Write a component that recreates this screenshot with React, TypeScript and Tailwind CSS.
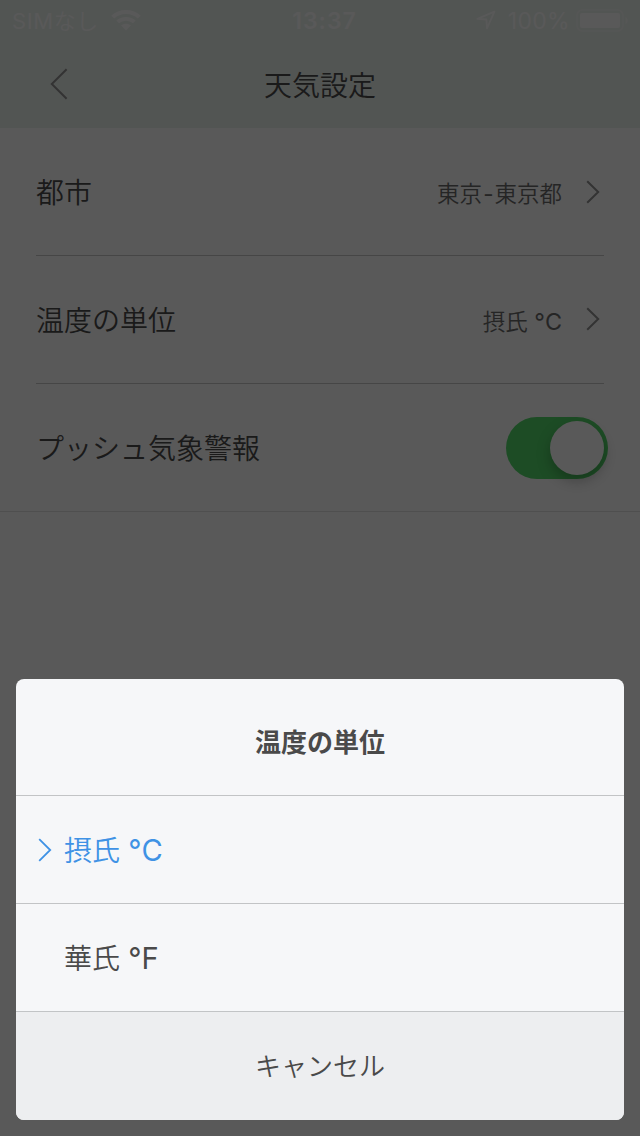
import React from 'react';
import clsx from 'clsx';

interface ChevronProps {
  className?: string;
  strokeWidth?: number;
}

const Chevron: React.FC<ChevronProps> = ({ className, strokeWidth = 2 }) => (
  <svg
    width="14"
    height="24"
    viewBox="0 0 14 24"
    fill="none"
    stroke="currentColor"
    strokeWidth={strokeWidth}
    className={className}
  >
    <path d="M1.2 1.2L12.2 12L1.2 22.8" />
  </svg>
);

const StatusBar: React.FC = () => (
  <div className="grid grid-cols-3 items-center h-10 pl-3 pr-[11px] text-[22px] text-white">
    <div className="flex items-center gap-3">
      <span className="pt-0.5 whitespace-nowrap tracking-[0.6px]">
        SIM<span className="font-[350]">なし</span>
      </span>
      <svg width="30" height="21" viewBox="0 0 28 21" preserveAspectRatio="none" fill="none" stroke="currentColor">
        <path d="M1.6 7.2C8.4 0.4 19.6 0.4 26.4 7.2" strokeWidth="4" />
        <path d="M6.2 11.9C10.4 7.8 17.6 7.8 21.8 11.9" strokeWidth="3.6" />
        <path d="M14 20.5L9.4 15.6C12 13.2 16 13.2 18.6 15.6Z" fill="currentColor" stroke="none" />
      </svg>
    </div>
    <span className="pt-0.5 pl-2 text-center font-semibold text-[23px] tracking-[1px]">13:37</span>
    <div className="flex items-center justify-end">
      <svg width="20" height="20" viewBox="0 0 20 20" fill="none" stroke="currentColor" strokeWidth="1.8" strokeLinejoin="round" className="mr-3">
        <path d="M18.4 1.6L1.4 8.8L10.4 9.5L11 18.4Z" />
      </svg>
      <span className="pt-0.5 mr-1.5 text-[23px] tracking-[0.3px]">100%</span>
      <svg width="53" height="23" viewBox="0 0 53 23">
        <rect x="1" y="1" width="46" height="21" rx="5.5" fill="none" stroke="currentColor" strokeOpacity="0.4" strokeWidth="1.6" />
        <rect x="4" y="4" width="40" height="15" rx="2" fill="currentColor" />
        <path d="M49.5 8C52.5 9 52.5 14 49.5 15Z" fill="currentColor" fillOpacity="0.5" />
      </svg>
    </div>
  </div>
);

const Header: React.FC = () => (
  <header className="h-32 bg-[#ebf2ed]">
    <StatusBar />
    <div className="grid grid-cols-3 items-center h-[88px]">
      <svg width="18" height="32" viewBox="0 0 18 32" fill="none" stroke="#929292" strokeWidth="2" className="ml-[50px]">
        <path d="M16.6 1.2L1.8 16L16.6 30.8" />
      </svg>
      <h1 className="pt-1 text-center text-[28px] font-[350] text-[#4c4c4c]">天気設定</h1>
    </div>
  </header>
);

interface UnitLabelProps {
  name: string;
  symbol?: string;
}

const UnitLabel: React.FC<UnitLabelProps> = ({ name, symbol }) => (
  <>
    {name}
    {symbol && <span className="font-normal text-[1.04em]"> {symbol}</span>}
  </>
);

interface SettingRowProps {
  label: string;
  value?: React.ReactNode;
  last?: boolean;
  children?: React.ReactNode;
}

const SettingRow: React.FC<SettingRowProps> = ({ label, value, last = false, children }) => (
  <div className={clsx('h-32', last ? 'border-b border-[#e2e2e2] px-9' : 'mx-9 border-b border-[#c8c8c8]')}>
    <div className="flex items-center justify-between h-full">
      <span className="pt-0.5 text-[28px] font-[350] text-[#4c4c4c]">{label}</span>
      {value && (
        <div className="flex items-center">
          <span className="pt-1 text-[22.5px] font-[350] text-[#6c6c6c]">{value}</span>
          <Chevron className="ml-6 mr-1 text-[#929292]" />
        </div>
      )}
      {children}
    </div>
  </div>
);

const Toggle: React.FC = () => (
  <div className="flex justify-end w-[102px] h-[62px] p-1 -mr-1 rounded-full bg-[#53d96a]">
    <div className="w-[54px] h-[54px] rounded-full bg-white shadow-[0_6px_14px_rgba(0,0,0,0.25)]" />
  </div>
);

interface OptionProps extends UnitLabelProps {
  selected?: boolean;
}

const Option: React.FC<OptionProps> = ({ name, symbol, selected = false }) => (
  <button
    className={clsx(
      'flex items-center h-[108px] pl-[22px] border-b border-[#c2c4c6] text-[28px] font-[350]',
      selected ? 'text-[#3f92e5]' : 'text-[#4a4a4a]'
    )}
  >
    <span className="w-[26px]">{selected && <Chevron strokeWidth={1.8} />}</span>
    <span className="pt-[3px]">
      <UnitLabel name={name} symbol={symbol} />
    </span>
  </button>
);

const UnitSheet: React.FC = () => (
  <div className="absolute inset-x-4 bottom-4 flex flex-col overflow-hidden rounded-lg bg-[#f6f7f9]">
    <h2 className="flex items-center justify-center h-[117px] pt-2.5 border-b border-[#c2c4c6] text-[26px] font-bold text-[#4a4a4a]">
      温度の単位
    </h2>
    <Option name="摂氏" symbol="°C" selected />
    <Option name="華氏" symbol="°F" />
    <button className="h-[108px] bg-[#edeef0] text-[26px] font-[350] text-[#4a4a4a]">キャンセル</button>
  </div>
);

export default function App() {
  return (
    <div className="relative w-[640px] h-[1136px] overflow-hidden bg-white font-[Inter,'Noto_Sans_CJK_JP',sans-serif]">
      <Header />
      <main>
        <SettingRow label="都市" value={<>東京<span className="mx-px font-normal">-</span>東京都</>} />
        <SettingRow label="温度の単位" value={<UnitLabel name="摂氏" symbol="°C" />} />
        <SettingRow label="プッシュ気象警報" last>
          <Toggle />
        </SettingRow>
      </main>

      {/* Dimmed backdrop */}
      <div className="absolute inset-0 bg-black/65" />
      <UnitSheet />
    </div>
  );
}
